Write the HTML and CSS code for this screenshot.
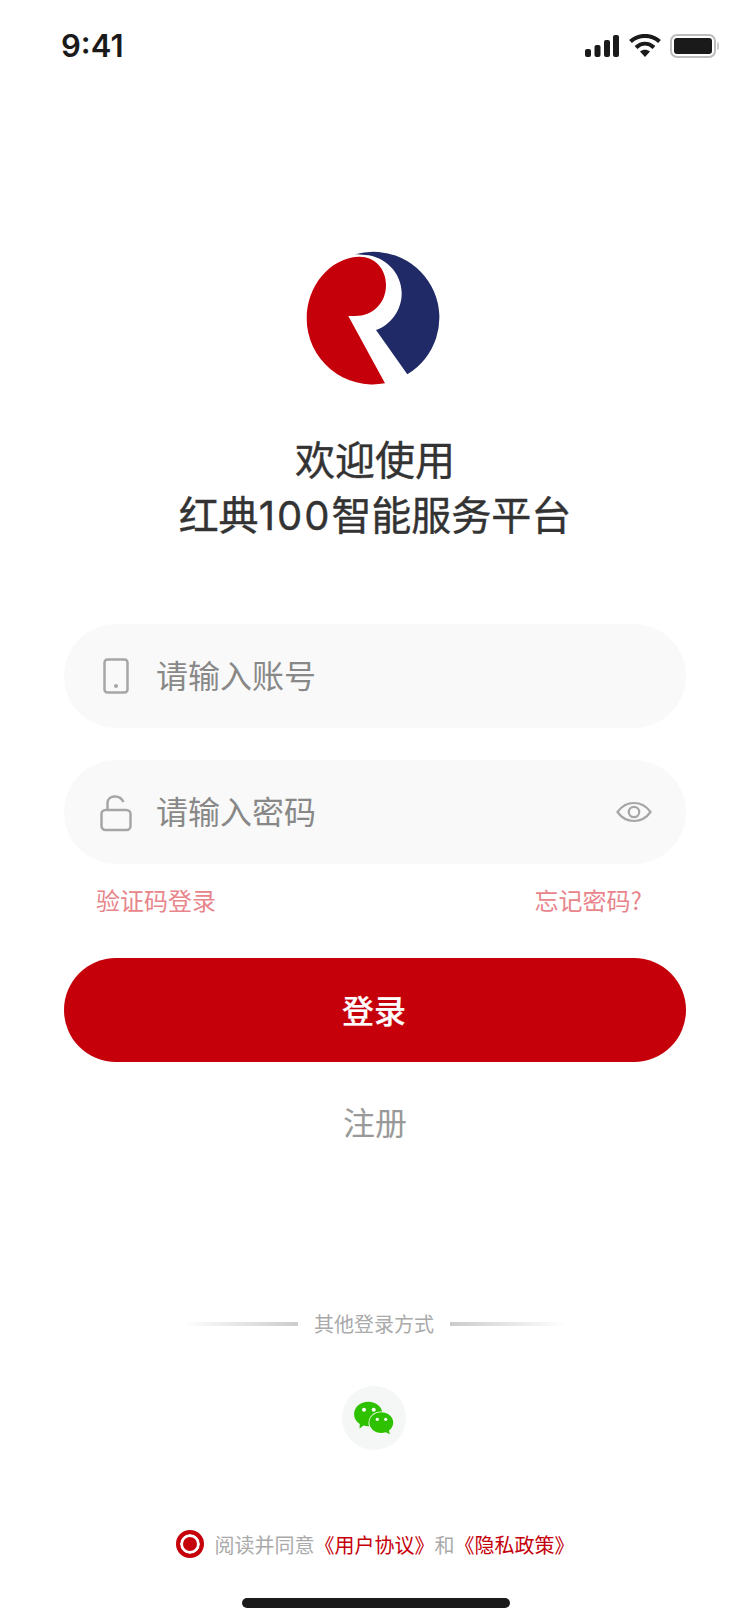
FILE: index.html
```html
<!DOCTYPE html>
<html lang="zh-CN">
<head>
    <meta charset="UTF-8">
    <meta name="viewport" content="width=device-width, initial-scale=1.0">
    <title>登录</title>
    <link rel="stylesheet" href="styles.css">
</head>

<body>
    <div class="page">
        <div class="status-bar">
            <span class="time">9:41</span>
            <div class="status-icons">
                <svg class="signal" width="34" height="22" viewBox="0 0 34 22">
                    <rect x="0" y="14" width="6" height="8" rx="2"/>
                    <rect x="9.500" y="10" width="6" height="12" rx="2"/>
                    <rect x="19" y="5" width="6" height="17" rx="2"/>
                    <rect x="28" y="0" width="6" height="22" rx="2"/>
                </svg>
                <svg class="wifi" width="32" height="23" viewBox="0 0 32 23">
                    <path d="M1.500 7.500C9.500 0 22.500 0 30.500 7.500" fill="none" stroke="#1a1a1a" stroke-width="4"/>
                    <path d="M7 13.500C12.500 8.500 19.500 8.500 25 13.500" fill="none" stroke="#1a1a1a" stroke-width="4"/>
                    <path d="M11 17.500C14 15 18 15 21 17.500L16 23Z" fill="#1a1a1a"/>
                </svg>
                <div class="battery"><div class="battery-level"></div></div>
                <div class="battery-tip"></div>
            </div>
        </div>

        <svg class="logo" width="140" height="140" viewBox="0 0 140 140">
            <path fill="#c6000b" d="M55.300 8.700C71 8 83 20 83 37C83 55 70 68 52 68L45.300 68L82 135.300A66 66 0 0 1 3.700 70.300C3.700 38 27 10 55.300 8.700Z"/>
            <path fill="#1f2a66" d="M52 6.300A66 66 0 0 1 104.300 126.300L73 82C88 77 98.700 62 98.700 45.300C98.700 25 82 8 62 7C58 6.700 55 6.500 52 6.300Z"/>
        </svg>

        <h1 class="title">欢迎使用<br>红典<span class="digits">100</span>智能服务平台</h1>

        <div class="form">
            <div class="field">
                <span class="field-icon">
                    <svg width="32" height="40" viewBox="0 0 32 40">
                        <rect x="4.500" y="3.500" width="23" height="33" rx="3" fill="none" stroke="#a6a6a6" stroke-width="2.500"/>
                        <circle cx="16" cy="30" r="2" fill="#a6a6a6"/>
                    </svg>
                </span>
                <span class="placeholder">请输入账号</span>
            </div>
            <div class="field">
                <span class="field-icon">
                    <svg width="32" height="40" viewBox="0 0 32 40">
                        <rect x="1.500" y="18" width="29" height="20" rx="4" fill="none" stroke="#a6a6a6" stroke-width="2.500"/>
                        <path d="M7.500 18V11C7.500 3.500 19.500 1.500 23.500 10" fill="none" stroke="#a6a6a6" stroke-width="2.500"/>
                    </svg>
                </span>
                <span class="placeholder">请输入密码</span>
                <svg class="eye" width="36" height="22" viewBox="0 0 36 22">
                    <path d="M1.500 11C10 -1 26 -1 34.500 11C26 23 10 23 1.500 11Z" fill="none" stroke="#a6a6a6" stroke-width="2.200"/>
                    <circle cx="18" cy="11" r="5.200" fill="none" stroke="#a6a6a6" stroke-width="2.200"/>
                </svg>
            </div>
        </div>

        <div class="links">
            <span>验证码登录</span>
            <span>忘记密码?</span>
        </div>

        <button class="login-button">登录</button>
        <div class="register">注册</div>

        <div class="divider">
            <span class="line line-left"></span>
            <span class="divider-text">其他登录方式</span>
            <span class="line line-right"></span>
        </div>

        <div class="wechat">
            <svg width="40" height="34" viewBox="0 0 40 34">
                <path fill="#2dc100" d="M14.300 0.700C22 0.700 28.500 6 28.500 13C28.500 20 22 25.300 14.300 25.300C12.500 25.300 11 25 9.500 24.600L5.500 27.500L5.800 23C2.400 20.800 0.100 17.200 0.100 13C0.100 6 6.500 0.700 14.300 0.700Z"/>
                <ellipse cx="27.300" cy="21.700" rx="12.800" ry="11.300" fill="#fff"/>
                <path fill="#2dc100" d="M27.300 11.200C34 11.200 39.300 15.800 39.300 21.500C39.300 24.800 37.600 27.600 35 29.500L35.800 33.200L31.800 31.300C30.400 31.800 28.900 32 27.300 32C20.600 32 15.300 27.300 15.300 21.500C15.300 15.800 20.600 11.200 27.300 11.200Z"/>
                <circle cx="10" cy="8.700" r="2" fill="#fff"/>
                <circle cx="19.700" cy="8.700" r="2" fill="#fff"/>
                <circle cx="23.300" cy="18.300" r="1.600" fill="#fff"/>
                <circle cx="31.700" cy="18.300" r="1.600" fill="#fff"/>
            </svg>
        </div>

        <div class="agreement">
            <span class="radio"></span>
            <span class="agreement-text">阅读并同意<a>《用户协议》</a>和<a>《隐私政策》</a></span>
        </div>

        <div class="home-bar"></div>
    </div>
</body>
</html>
```

FILE: styles.css
```css
body{
    margin: 0;
    background-color: #fff;
    font-family: "Noto Sans CJK SC", "Noto Sans", sans-serif;
}
.page{
    width: 750px;
    height: 1624px;
    display: flex;
    flex-direction: column;
    align-items: center;
    overflow: hidden;
}
.status-bar{
    width: 100%;
    height: 88px;
    box-sizing: border-box;
    padding: 3px 31px 0 61px;
    display: flex;
    justify-content: space-between;
    align-items: center;
}
.time{
    font-family: Inter, sans-serif;
    font-size: 31px;
    font-weight: 600;
    color: #1a1a1a;
}
.status-icons{
    display: flex;
    align-items: center;
}
.signal{
    fill: #1a1a1a;
    margin-right: 10px;
}
.wifi{
    margin-right: 9px;
}
.battery{
    width: 46px;
    height: 24px;
    box-sizing: border-box;
    padding: 2px;
    border: 2px solid #bdbdbd;
    border-radius: 7px;
}
.battery-level{
    height: 100%;
    background-color: #1a1a1a;
    border-radius: 3px;
}
.battery-tip{
    width: 2px;
    height: 8px;
    margin-left: 1px;
    background-color: #cfcfcf;
    border-radius: 0 2px 2px 0;
}
.logo{
    margin-top: 160px;
    margin-right: 4px;
}
.title{
    margin: 45px 0 1px;
    font-family: Inter, "Noto Sans CJK SC", sans-serif;
    font-size: 40px;
    line-height: 55px;
    font-weight: 400;
    -webkit-text-stroke: 0.4px #333;
    color: #333;
    text-align: center;
}
.digits{
    letter-spacing: 2px;
}
.form{
    margin-top: 80px;
    display: flex;
    flex-direction: column;
    gap: 32px;
}
.field{
    width: 622px;
    height: 104px;
    box-sizing: border-box;
    padding: 0 34px 0 36px;
    display: flex;
    align-items: center;
    background-color: #f9f9f9;
    border-radius: 52px;
}
.field-icon{
    width: 32px;
    height: 40px;
    margin-right: 24px;
}
.placeholder{
    flex: 1;
    padding-bottom: 4px;
    font-size: 32px;
    color: #888;
}
.links{
    width: 622px;
    box-sizing: border-box;
    padding: 0 44px 0 32px;
    margin-top: 19px;
    margin-bottom: 1px;
    display: flex;
    justify-content: space-between;
    font-size: 24px;
    line-height: 34px;
    color: #e8858b;
}
.login-button{
    width: 622px;
    height: 104px;
    margin-top: 40px;
    padding: 0 2px 3px 0;
    border: none;
    border-radius: 52px;
    background-color: #c6000b;
    color: #fff;
    font-family: inherit;
    font-size: 32px;
    font-weight: 500;
    -webkit-text-stroke: 0.2px #fff;
}
.register{
    margin-top: 37px;
    font-size: 32px;
    line-height: 44px;
    color: #999;
}
.divider{
    margin-top: 167px;
    margin-right: 2px;
    display: flex;
    align-items: center;
    gap: 16px;
    height: 28px;
}
.line{
    width: 116px;
    height: 4px;
}
.line-left{
    background: linear-gradient(to right, rgba(200,200,200,0), #ccc);
}
.line-right{
    background: linear-gradient(to left, rgba(200,200,200,0), #ccc);
}
.divider-text{
    padding-bottom: 2px;
    font-size: 20px;
    color: #aaa;
}
.wechat{
    width: 64px;
    height: 64px;
    margin-top: 48px;
    margin-right: 2px;
    display: flex;
    justify-content: center;
    align-items: center;
    background-color: #f5f7f6;
    border-radius: 50%;
}
.agreement{
    margin-top: 80px;
    height: 28px;
    display: flex;
    align-items: center;
    gap: 11px;
}
.radio{
    width: 28px;
    height: 28px;
    box-sizing: border-box;
    border: 4px solid #c6000b;
    border-radius: 50%;
    background-color: #c6000b;
    box-shadow: inset 0 0 0 3px #fff;
}
.agreement-text{
    font-size: 20px;
    color: #aaa;
}
.agreement-text a{
    color: #c6000b;
}
.home-bar{
    width: 268px;
    height: 10px;
    margin-top: 40px;
    margin-left: 2px;
    background-color: #1a1a1a;
    border-radius: 5px;
}
```
